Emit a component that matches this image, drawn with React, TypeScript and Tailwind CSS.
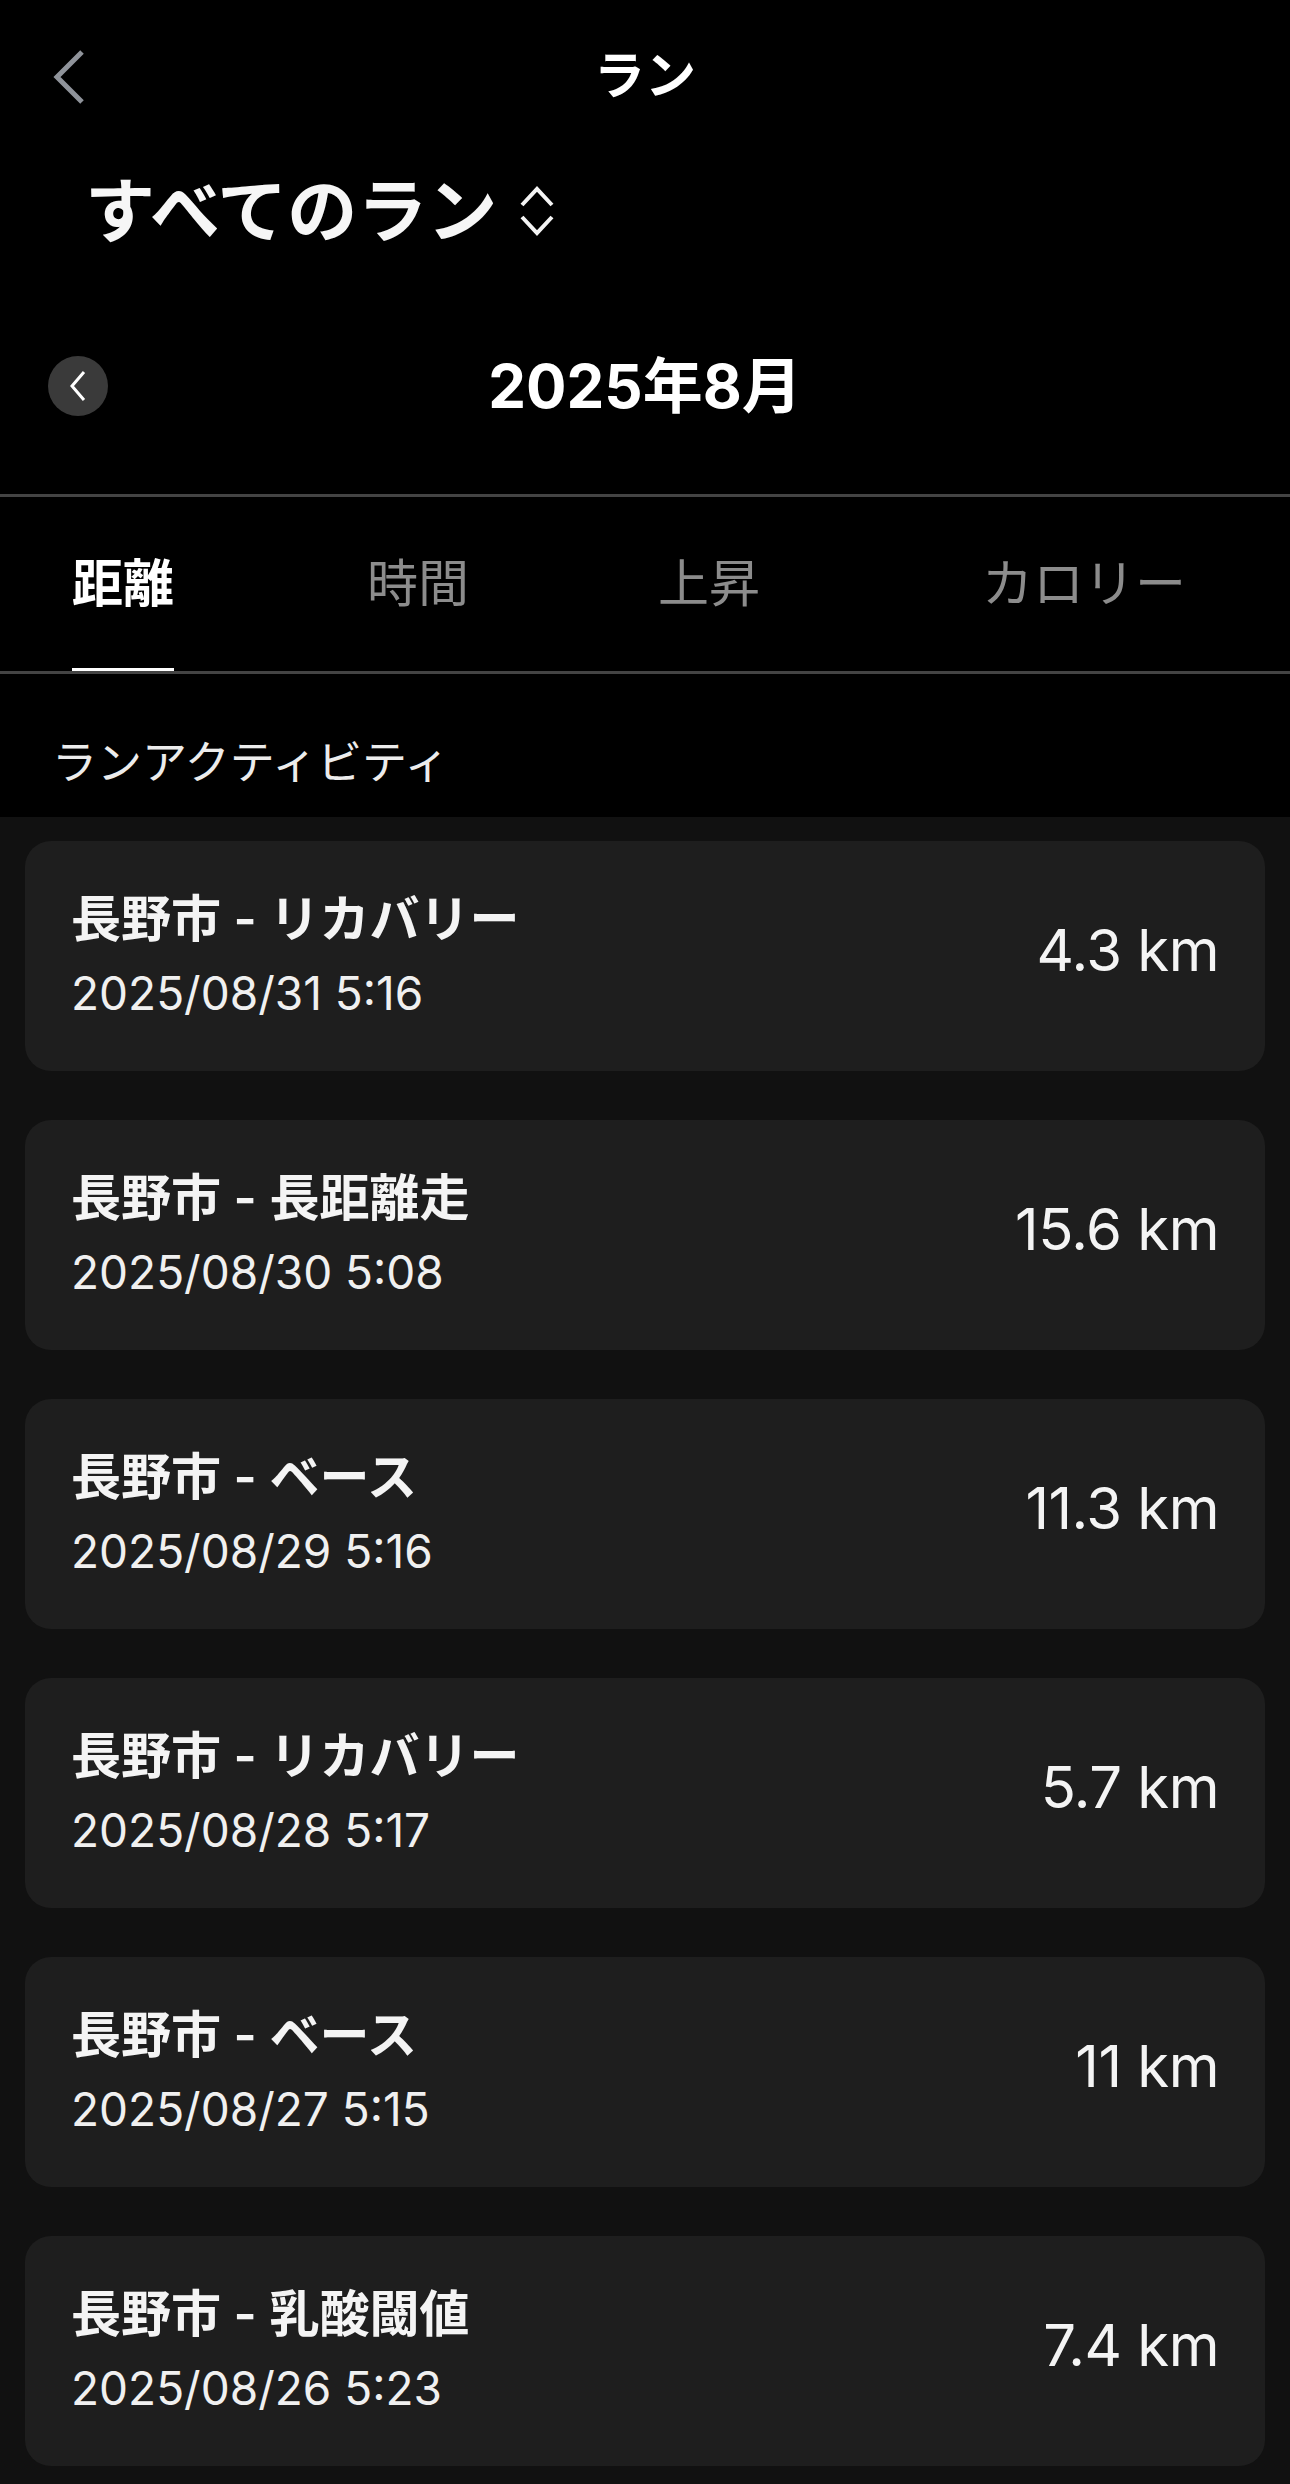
import React from 'react'

interface Run {
  title: string
  date: string
  distance: string
}

const runs: Run[] = [
  { title: '長野市 - リカバリー', date: '2025/08/31 5:16', distance: '4.3 km' },
  { title: '長野市 - 長距離走', date: '2025/08/30 5:08', distance: '15.6 km' },
  { title: '長野市 - ベース', date: '2025/08/29 5:16', distance: '11.3 km' },
  { title: '長野市 - リカバリー', date: '2025/08/28 5:17', distance: '5.7 km' },
  { title: '長野市 - ベース', date: '2025/08/27 5:15', distance: '11 km' },
  { title: '長野市 - 乳酸閾値', date: '2025/08/26 5:23', distance: '7.4 km' },
]

const tabs = [
  { label: '距離', ml: 'ml-[72px]' },
  { label: '時間', ml: 'ml-[193px]' },
  { label: '上昇', ml: 'ml-[189px]' },
  { label: 'カロリー', ml: 'ml-[222px]' },
]

const font = "font-['Inter','Noto_Sans_CJK_JP',sans-serif]"

function RunCard({ run }: { run: Run }) {
  return (
    <div className="mx-[25px] h-[230px] rounded-[26px] bg-[#1e1e1e] pl-[46px] pr-[46px] flex items-center justify-between">
      <div className="flex flex-col">
        <span className="text-[50px] leading-[64px] font-semibold text-[#f4f4f4]">{run.title}</span>
        <span className="mt-[10px] text-[46px] leading-[64px] text-[#f0f0f0]">{run.date}</span>
      </div>
      <span className="mb-[12px] text-[58px] leading-none tracking-[-0.5px] text-[#f4f4f4]">{run.distance}</span>
    </div>
  )
}

export default function App() {
  return (
    <div className={`${font} w-[1290px] min-h-[2484px] bg-[#111111] flex flex-col`}>
      <div className="bg-black">
        {/* nav bar */}
        <div className="relative h-[152px] flex items-center justify-center">
          <svg className="absolute left-[50px] top-[48px]" width="38" height="58" viewBox="0 0 38 58" fill="none">
            <path d="M32 4 L7 29 L32 54" stroke="#8f939a" strokeWidth="5" />
          </svg>
          <span className="text-[51px] font-semibold text-white">ラン</span>
        </div>

        {/* filter */}
        <div className="h-[118px] flex items-center pl-[85px] gap-[22px]">
          <span className="text-[70px] font-bold text-[#f6f6f6]">すべてのラン</span>
          <svg width="36" height="50" viewBox="0 0 36 50" fill="none">
            <path d="M3 19 L18 3 L33 19" stroke="#f4f4f4" strokeWidth="4" />
            <path d="M3 31 L18 47 L33 31" stroke="#f4f4f4" strokeWidth="4" />
          </svg>
        </div>

        {/* month */}
        <div className="relative h-[224px] pt-[8px] flex items-center justify-center">
          <button className="absolute left-[48px] top-[86px] w-[60px] h-[60px] rounded-full bg-[#3a3a3a] flex items-center justify-center">
            <svg width="22" height="32" viewBox="0 0 22 32" fill="none">
              <path d="M17 2 L5 16 L17 30" stroke="#ffffff" strokeWidth="3" />
            </svg>
          </button>
          <span className="text-[60px] font-bold text-white">2025年8月</span>
        </div>

        <div className="h-[3px] bg-[#444444]" />

        {/* tabs */}
        <div className="h-[177px] border-b-[3px] border-[#444444] flex items-stretch">
          {tabs.map((tab, i) => (
            <div key={tab.label} className={`${tab.ml} relative flex items-center`}>
              <span
                className={
                  i === 0
                    ? 'text-[51px] font-bold text-white'
                    : 'text-[51px] text-[#8c8c8c]'
                }
              >
                {tab.label}
              </span>
              {i === 0 && <div className="absolute left-0 right-0 bottom-0 h-[3px] bg-white" />}
            </div>
          ))}
        </div>

        {/* section header */}
        <div className="h-[143px] pt-[35px] pl-[52px] flex items-center">
          <span className="text-[45px] text-[#ececec]">ランアクティビティ</span>
        </div>
      </div>

      <div className="flex-1 pt-[24px] flex flex-col gap-[49px]">
        {runs.map((run, i) => (
          <RunCard key={i} run={run} />
        ))}
      </div>
    </div>
  )
}
